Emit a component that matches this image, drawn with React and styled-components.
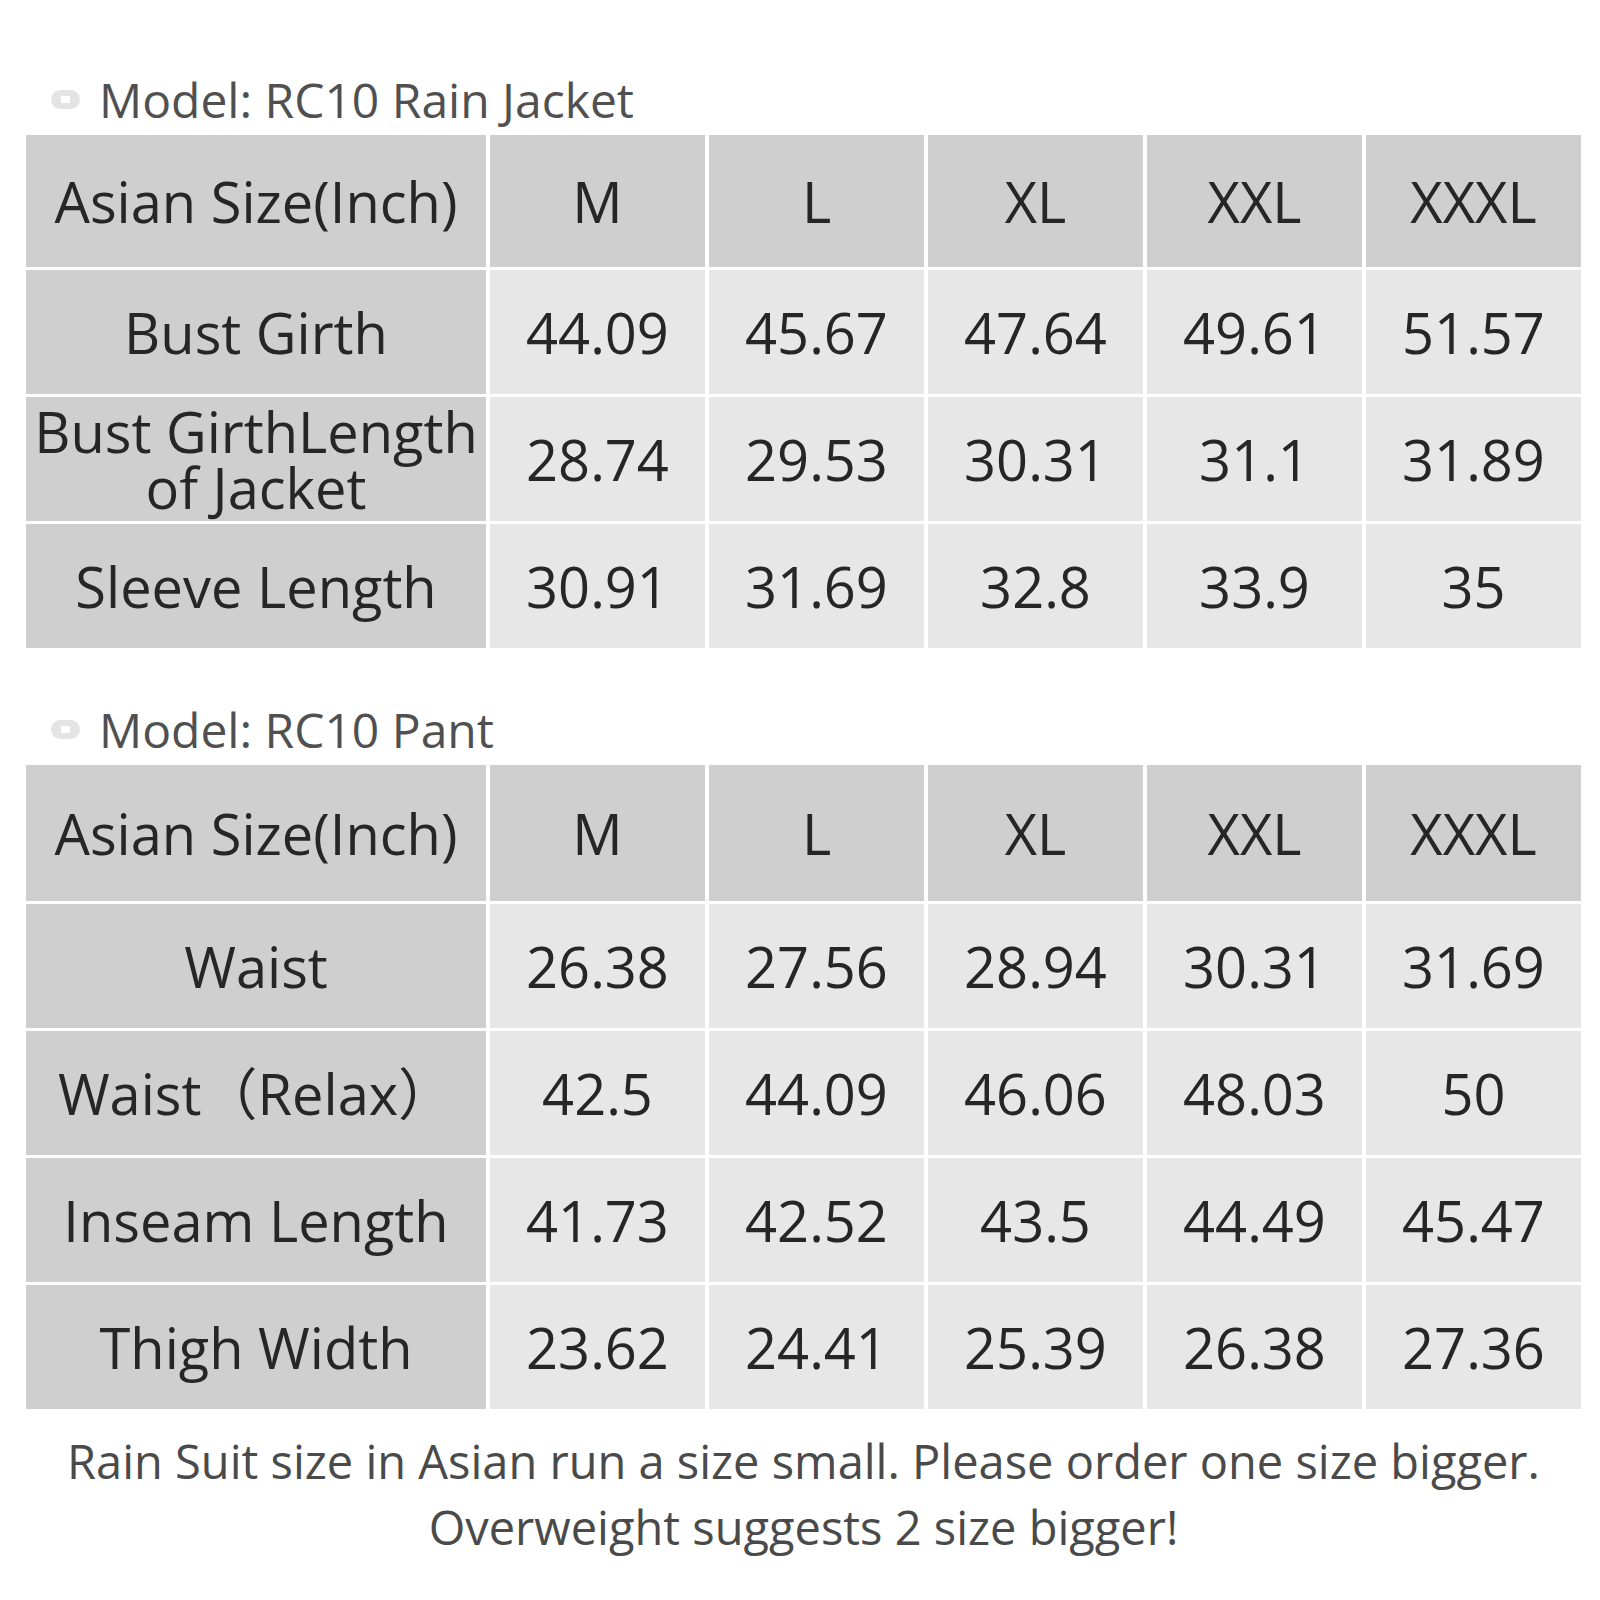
import styled, { createGlobalStyle } from "styled-components";

const GlobalStyle = createGlobalStyle`
  body {
    margin: 0;
    background: #fff;
    font-family: "Open Sans", "Noto Sans CJK SC", sans-serif;
  }
`;

const sizes = ["M", "L", "XL", "XXL", "XXXL"];

const tables = [
  {
    title: "Model: RC10 Rain Jacket",
    headHeight: 132,
    rows: [
      { label: "Bust Girth", values: ["44.09", "45.67", "47.64", "49.61", "51.57"] },
      { label: "Bust GirthLength of Jacket", values: ["28.74", "29.53", "30.31", "31.1", "31.89"] },
      { label: "Sleeve Length", values: ["30.91", "31.69", "32.8", "33.9", "35"] },
    ],
  },
  {
    title: "Model: RC10 Pant",
    headHeight: 136,
    rows: [
      { label: "Waist", values: ["26.38", "27.56", "28.94", "30.31", "31.69"] },
      { label: "Waist（Relax）", values: ["42.5", "44.09", "46.06", "48.03", "50"] },
      { label: "Inseam Length", values: ["41.73", "42.52", "43.5", "44.49", "45.47"] },
      { label: "Thigh Width", values: ["23.62", "24.41", "25.39", "26.38", "27.36"] },
    ],
  },
];

export default function App() {
  return (
    <Page>
      <GlobalStyle />
      {tables.map((t) => (
        <Section key={t.title}>
          <Title>
            <Bullet />
            {t.title}
          </Title>
          <Table $rows={t.rows.length} $head={t.headHeight}>
            <Cell $kind="head">Asian Size(Inch)</Cell>
            {sizes.map((s) => (
              <Cell key={s} $kind="head">{s}</Cell>
            ))}
            {t.rows.map((r) => [
              <Cell key={r.label} $kind="label">{r.label}</Cell>,
              ...r.values.map((v, i) => (
                <Cell key={r.label + i} $kind="value">{v}</Cell>
              )),
            ])}
          </Table>
        </Section>
      ))}
      <Note>
        Rain Suit size in Asian run a size small. Please order one size bigger.
        <br />
        Overweight suggests 2 size bigger!
      </Note>
    </Page>
  );
}

const Page = styled.div`
  width: 1600px;
  box-sizing: border-box;
  padding: 72px 19px 40px 26px;
  display: flex;
  flex-direction: column;
  gap: 54px;
`;

const Section = styled.section`
  display: flex;
  flex-direction: column;
  gap: 8px;
`;

const Title = styled.h2`
  margin: 0;
  display: flex;
  align-items: center;
  gap: 19px;
  padding-left: 25px;
  font-size: 48px;
  line-height: 55px;
  font-weight: 400;
  color: #505050;
`;

const Bullet = styled.span`
  position: relative;
  width: 29px;
  height: 19px;
  border-radius: 10px;
  background: #e4e4e4;
  flex-shrink: 0;

  &::after {
    content: "";
    position: absolute;
    left: 10px;
    top: 6px;
    width: 9px;
    height: 7px;
    background: #fff;
  }
`;

const Table = styled.div`
  display: grid;
  grid-template-columns: 460px repeat(5, 1fr);
  grid-template-rows: ${(p) => p.$head}px repeat(${(p) => p.$rows}, 124px);
  column-gap: 4px;
  row-gap: 3px;
`;

const Cell = styled.div`
  display: flex;
  align-items: center;
  justify-content: center;
  text-align: center;
  padding: 0 6px;
  font-size: 56px;
  line-height: 1;
  color: #262626;
  background: ${(p) => (p.$kind === "value" ? "#e7e7e7" : "#cfcfcf")};
`;

const Note = styled.p`
  margin: -35px 0 0;
  text-align: center;
  font-size: 47px;
  line-height: 66px;
  color: #4a4a4a;
`;
